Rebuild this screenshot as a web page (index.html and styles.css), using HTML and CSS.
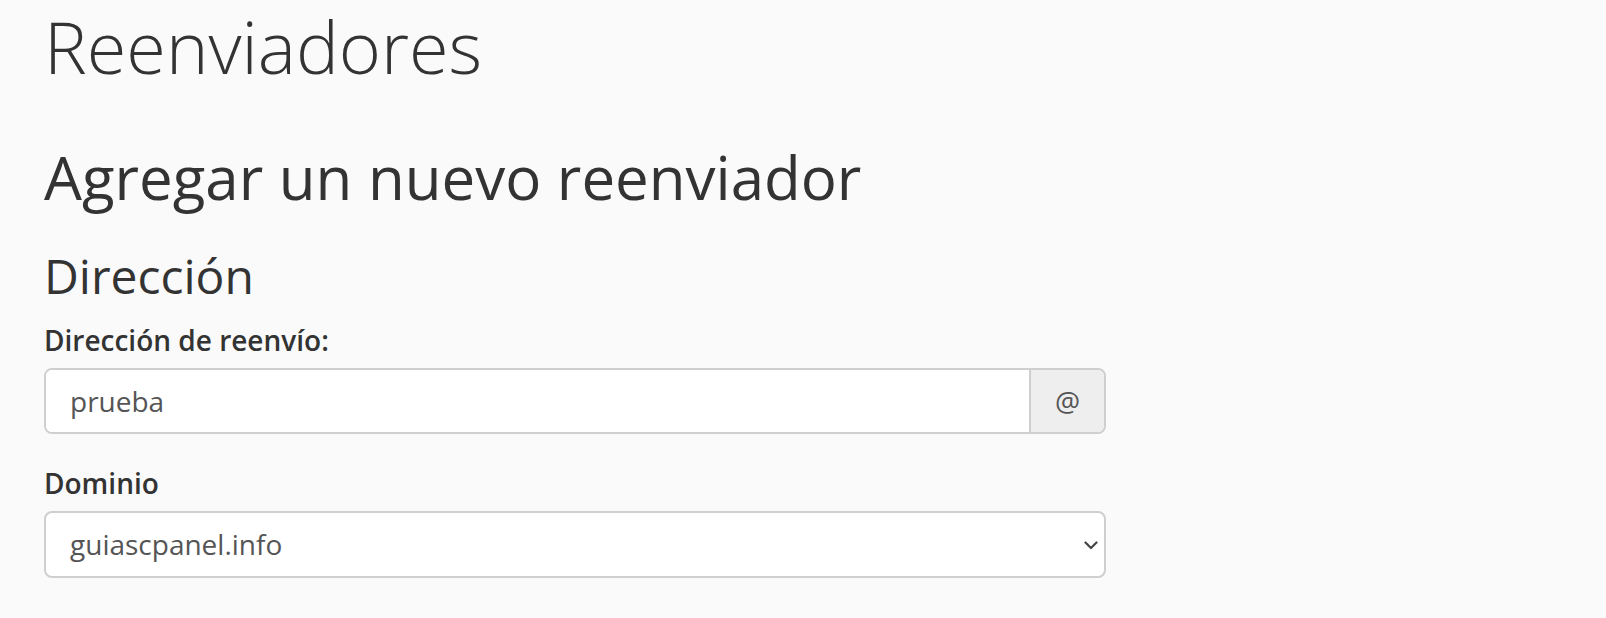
FILE: index.html
```html
<!DOCTYPE html>
<html lang="es">
<head>
<meta charset="utf-8">
<title>Reenviadores</title>
<link rel="stylesheet" href="styles.css">
</head>
<body>
<div class="page">
  <h1 class="title">Reenviadores</h1>
  <h2 class="section-title">Agregar un nuevo reenviador</h2>
  <h3 class="sub-title">Dirección</h3>
  <div class="form-group">
    <label class="field-label" for="email">Dirección de reenvío:</label>
    <div class="input-group">
      <input id="email" class="text-input" type="text" value="prueba">
      <span class="addon">@</span>
    </div>
  </div>
  <div class="form-group">
    <label class="field-label" for="domain">Dominio</label>
    <div class="select-wrap">
      <select id="domain" class="select-input">
        <option>guiascpanel.info</option>
      </select>
      <svg class="chevron" width="14" height="9" viewBox="0 0 14 9"><path d="M1.5 1.5 L7 7 L12.5 1.5" fill="none" stroke="#444" stroke-width="2.2" stroke-linecap="round" stroke-linejoin="round"/></svg>
    </div>
  </div>
</div>
</body>
</html>
```
FILE: styles.css
```css
html, body {
  margin: 0;
  padding: 0;
  background: #fafafa;
}
body {
  font-family: "Open Sans", "Noto Sans", sans-serif;
  color: #333;
}
.page {
  padding: 7px 0 0 44px;
  width: 1062px;
}
.title {
  margin: 0;
  font-size: 72px;
  font-weight: 300;
  line-height: 1.1;
}
.section-title {
  margin: 58px 0 0;
  font-size: 60px;
  font-weight: 400;
  line-height: 1.1;
}
.sub-title {
  margin: 40px 0 0;
  font-size: 48px;
  font-weight: 400;
  line-height: 1.1;
}
.form-group {
  display: flex;
  flex-direction: column;
  margin-top: 17px;
}
.form-group + .form-group {
  margin-top: 29px;
}
.field-label {
  font-size: 28px;
  font-weight: 600;
  line-height: 40px;
  margin-bottom: 8px;
}
.input-group {
  display: flex;
  height: 66px;
  box-sizing: border-box;
  border: 2px solid #cfcfcf;
  border-radius: 8px;
  overflow: hidden;
  background: #fff;
}
.text-input {
  flex: 1;
  border: 0;
  outline: none;
  padding: 0 24px;
  font-family: inherit;
  font-size: 28px;
  color: #555;
  background: #fff;
}
.addon {
  width: 73px;
  display: flex;
  align-items: center;
  justify-content: center;
  background: #eee;
  border-left: 2px solid #cfcfcf;
  font-size: 28px;
  color: #555;
}
.select-wrap {
  position: relative;
}
.select-input {
  width: 100%;
  height: 67px;
  box-sizing: border-box;
  border: 2px solid #cfcfcf;
  border-radius: 8px;
  background: #fff;
  padding: 0 24px;
  font-family: inherit;
  font-size: 28px;
  color: #555;
  appearance: none;
  -webkit-appearance: none;
  outline: none;
}
.chevron {
  position: absolute;
  right: 8px;
  top: 30px;
}
```
